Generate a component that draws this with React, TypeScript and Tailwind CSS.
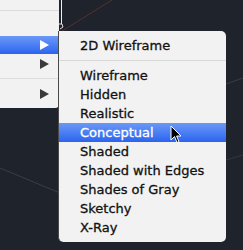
import React from "react";

const hl = "bg-gradient-to-b from-[#6b98f7] to-[#2c63ee] text-white";

function Arrow({ white }: { white?: boolean }) {
  return (
    <svg width="9" height="10" viewBox="0 0 9 10" className="mr-[10px]">
      <path d="M0 0 L9 5 L0 10 Z" fill={white ? "#ffffff" : "#3a3a3a"} />
    </svg>
  );
}

export default function App() {
  const items = [
    "Wireframe",
    "Hidden",
    "Realistic",
    "Conceptual",
    "Shaded",
    "Shaded with Edges",
    "Shades of Gray",
    "Sketchy",
    "X-Ray",
  ];
  return (
    <div
      className="relative w-[243px] h-[250px] overflow-hidden bg-[#1f232b]"
      style={{ fontFamily: '"DejaVu Sans", "Liberation Sans", sans-serif' }}
    >
      {/* canvas lines */}
      <svg className="absolute inset-0" width="243" height="250">
        <line x1="62" y1="31" x2="112" y2="0" stroke="#5a2e34" strokeWidth="1" />
        <line x1="0" y1="168" x2="60" y2="193" stroke="#3a3f48" strokeWidth="1" />
        <line x1="226" y1="84" x2="243" y2="78" stroke="#3a3f48" strokeWidth="1" />
        <line x1="226" y1="160" x2="243" y2="155" stroke="#33373f" strokeWidth="1" />
        <line x1="61.5" y1="0" x2="61.5" y2="24" stroke="#f0f0f0" strokeWidth="1" />
        <path d="M58 24 L62 24 L63 27 L60 29" stroke="#e0e0e0" strokeWidth="1" fill="none" />
      </svg>

      {/* parent menu */}
      <div className="absolute left-0 top-0 w-[59px] h-[108px] bg-[#f2f2f2] rounded-br-[4px] flex flex-col">
        <div className="h-[10px]" />
        <div className="h-px bg-[#dcdcdc]" />
        <div className="h-[6px]" />
        <div className="h-[19px] flex items-center justify-end" />
        <div className={`h-[18px] flex items-center justify-end ${hl}`}>
          <Arrow white />
        </div>
        <div className="h-[19px] flex items-center justify-end">
          <Arrow />
        </div>
        <div className="h-[5px]" />
        <div className="h-px bg-[#dcdcdc]" />
        <div className="h-[5px]" />
        <div className="h-[19px] flex items-center justify-end">
          <Arrow />
        </div>
      </div>

      {/* submenu */}
      <div className="absolute left-[58px] top-[31px] w-[168px] h-[211px] bg-[#f2f2f2] border-l border-[#4a4a4a] rounded-tr-[5px] rounded-b-[5px] pt-[5px] flex flex-col text-[13px] text-[#111] [-webkit-text-stroke:0.3px]">
        <div className="h-[19px] flex items-center pl-[21px] leading-none">2D Wireframe</div>
        <div className="h-[5px]" />
        <div className="h-px bg-[#d8d8d8]" />
        <div className="h-[5px]" />
        {items.map((t) => (
          <div
            key={t}
            className={`h-[19px] flex items-center pl-[21px] leading-none ${
              t === "Conceptual" ? hl : ""
            }`}
          >
            {t}
          </div>
        ))}
      </div>

      {/* cursor */}
      <svg className="absolute left-[170px] top-[125px]" width="14" height="20" viewBox="0 0 14 20">
        <path
          d="M1 1 L1 15 L4.5 11.5 L7 17.5 L9 16.6 L6.6 11 L11 11 Z"
          fill="#000"
          stroke="#fff"
          strokeWidth="1"
          strokeLinejoin="round"
        />
      </svg>
    </div>
  );
}
